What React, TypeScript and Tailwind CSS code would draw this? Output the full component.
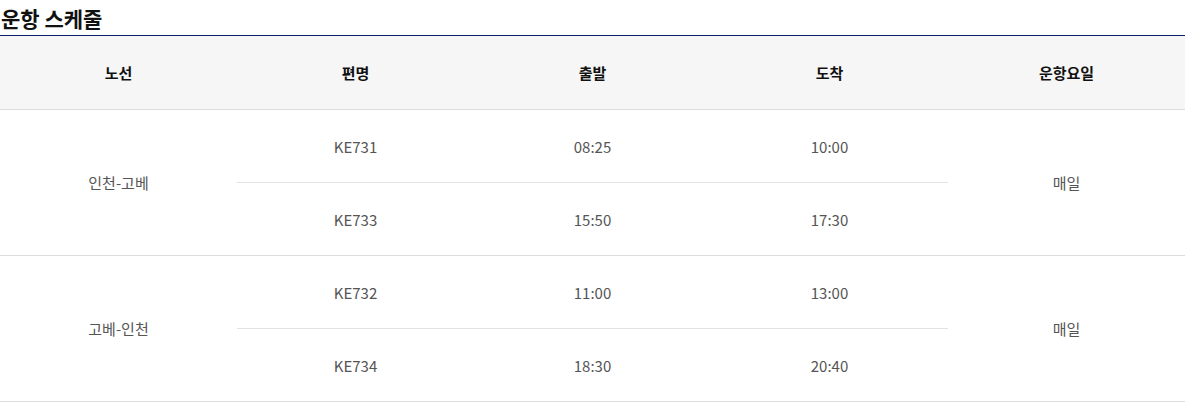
import React from 'react';

interface Flight {
  no: string;
  dep: string;
  arr: string;
}

interface Route {
  name: string;
  days: string;
  flights: Flight[];
}

const routes: Route[] = [
  {
    name: '인천-고베',
    days: '매일',
    flights: [
      { no: 'KE731', dep: '08:25', arr: '10:00' },
      { no: 'KE733', dep: '15:50', arr: '17:30' },
    ],
  },
  {
    name: '고베-인천',
    days: '매일',
    flights: [
      { no: 'KE732', dep: '11:00', arr: '13:00' },
      { no: 'KE734', dep: '18:30', arr: '20:40' },
    ],
  },
];

const App: React.FC = () => {
  return (
    <div className="w-[1185px] bg-white font-['Noto_Sans_CJK_KR','Noto_Sans',sans-serif]">
      <h2 className="text-[21px] font-bold text-[#111] leading-[36px] h-[36px] pl-[1px] border-b border-[#0b1e6b]">
        운항 스케줄
      </h2>
      <table className="w-full table-fixed border-collapse text-[15px]">
        <thead>
          <tr className="bg-[#f6f6f6] h-[73px] border-b border-[#dcdcdc]">
            <th className="font-bold text-[#111] pt-[2px]">노선</th>
            <th className="font-bold text-[#111] pt-[2px]">편명</th>
            <th className="font-bold text-[#111] pt-[2px]">출발</th>
            <th className="font-bold text-[#111] pt-[2px]">도착</th>
            <th className="font-bold text-[#111] pt-[2px]">운항요일</th>
          </tr>
        </thead>
        <tbody className="text-[#555]">
          {routes.map((r) =>
            r.flights.map((f, i) => (
              <tr
                key={f.no}
                className={`h-[73px] border-b ${i === 0 ? 'border-[#e2e2e2]' : 'border-[#dcdcdc]'}`}
              >
                {i === 0 && (
                  <td rowSpan={r.flights.length} className="text-center align-middle pt-[3px] border-b border-[#dcdcdc]">
                    {r.name}
                  </td>
                )}
                <td className="text-center align-middle pt-[3px]">{f.no}</td>
                <td className="text-center align-middle pt-[3px]">{f.dep}</td>
                <td className="text-center align-middle pt-[3px]">{f.arr}</td>
                {i === 0 && (
                  <td rowSpan={r.flights.length} className="text-center align-middle pt-[3px] border-b border-[#dcdcdc]">
                    {r.days}
                  </td>
                )}
              </tr>
            ))
          )}
        </tbody>
      </table>
    </div>
  );
};

export default App;
